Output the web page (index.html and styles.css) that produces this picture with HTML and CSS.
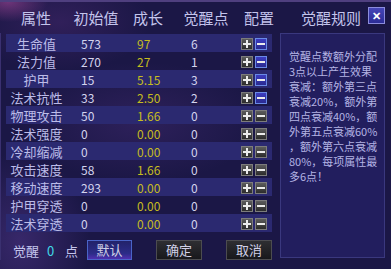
FILE: index.html
```html
<!DOCTYPE html>
<html>
<head>
<title>觉醒配置</title>
<link rel="stylesheet" href="styles.css">
</head>
<body>

<div class="window">
  <div class="header">
    <span class="col-name">属性</span>
    <span class="col-base">初始值</span>
    <span class="col-grow">成长</span>
    <span class="col-pts">觉醒点</span>
    <span class="col-cfg">配置</span>
    <span class="col-rule">觉醒规则</span>
    <div class="close">✕</div>
  </div>

  <div class="content">
    <div class="left">
      <div class="table" id="table"></div>

      <div class="footer">
        <span class="label">觉醒</span>
        <span class="free" id="free">0</span>
        <span class="label unit">点</span>
        <div class="btn blue">默认</div>
        <div class="btn dark ok">确定</div>
        <div class="btn dark cancel">取消</div>
      </div>
    </div>

    <div class="rules">
      觉醒点数额外分配<br>
      3点以上产生效果<br>
      衰减：额外第三点<br>
      衰减20%，额外第<br>
      四点衰减40%，额<br>
      外第五点衰减60%<br>
      ，额外第六点衰减<br>
      80%，每项属性最<br>
      多6点！
    </div>
  </div>
</div>

<script>
// attribute rows: name, base value, growth, awakening points
const rows = [
  ['生命值', '573', '97', 6],
  ['法力值', '270', '27', 1],
  ['护甲', '15', '5.15', 3],
  ['法术抗性', '33', '2.50', 2],
  ['物理攻击', '50', '1.66', 0],
  ['法术强度', '0', '0.00', 0],
  ['冷却缩减', '0', '0.00', 0],
  ['攻击速度', '58', '1.66', 0],
  ['移动速度', '293', '0.00', 0],
  ['护甲穿透', '0', '0.00', 0],
  ['法术穿透', '0', '0.00', 0]
];

const table = document.getElementById('table');

rows.forEach(function (r, i) {
  const row = document.createElement('div');
  row.className = 'row' + (i % 2 === 0 ? ' band' : '');
  row.innerHTML =
    '<span class="name">' + r[0] + '</span>' +
    '<span class="base">' + r[1] + '</span>' +
    '<span class="grow">' + r[2] + '</span>' +
    '<span class="pts">' + r[3] + '</span>' +
    '<span class="ops"><i class="op plus"></i><i class="op minus' + (r[3] > 0 ? ' on' : '') + '"></i></span>';
  table.appendChild(row);
});
</script>

</body>
</html>
```

FILE: styles.css
```css
* {
  margin: 0;
  padding: 0;
  box-sizing: border-box;
}

body {
  background-color: #17133d;
  font-family: "Noto Sans CJK SC", "Noto Sans", sans-serif;
}

/* Window with the purple backdrop */
.window {
  width: 391px;
  height: 269px;
  overflow: hidden;
  border-top: 2px solid #4f3f7f;
  background:
    radial-gradient(ellipse 40px 20px at 8px 0, rgba(160, 70, 150, 0.6), transparent),
    radial-gradient(ellipse 70px 90px at 20px 240px, rgba(90, 60, 150, 0.45), transparent),
    radial-gradient(ellipse 120px 60px at 140px 120px, rgba(80, 50, 130, 0.35), transparent),
    radial-gradient(ellipse 90px 50px at 60px 20px, rgba(70, 40, 110, 0.5), transparent),
    #1b1746;
}

/* Header */
.header {
  display: flex;
  align-items: center;
  height: 31px;
  padding-left: 5px;
  color: #c4c4ec;
  font-size: 15px;
  line-height: 18px;
}

.header span {
  text-align: center;
}

.col-name { width: 62px; }
.col-base { width: 58px; }
.col-grow { width: 46px; }
.col-pts { width: 70px; }
.col-cfg { width: 36px; }
.col-rule { margin-left: 24px; }

.close {
  width: 17px;
  height: 17px;
  margin-left: 7px;
  margin-top: -4px;
  background: linear-gradient(#4646b8, #2c2c96);
  border: 1px solid #8c8cdc;
  color: #fff;
  font-size: 11px;
  font-weight: bold;
  line-height: 15px;
  text-align: center;
}

/* Main area */
.content {
  display: flex;
  padding-left: 5px;
  border-left: 1px solid #3a3070;
}

.left {
  width: 266px;
  padding-top: 1px;
}

/* Table rows */
.row {
  display: grid;
  grid-template-columns: 75px 56px 54px 50px auto;
  align-items: center;
  height: 18px;
  font-size: 12px;
  color: #d4d4ee;
}

.row.band {
  background-color: #2b2970;
}

.row .name {
  padding-right: 14px;
  text-align: center;
  font-size: 13px;
  color: #bcbce8;
}

.row .grow {
  color: #c6bd1e;
}

.ops {
  display: flex;
  gap: 2px;
}

.op {
  position: relative;
  display: block;
  width: 12px;
  height: 12px;
  background: linear-gradient(#5c5c5c, #2c2c2c);
  border: 1px solid #7c7c7c;
}

.op::after,
.op.plus::before {
  content: "";
  position: absolute;
  left: 1px;
  right: 1px;
  top: 4px;
  height: 2px;
  background: #ececec;
}

.op.plus::before {
  left: 4px;
  right: auto;
  top: 1px;
  width: 2px;
  height: 8px;
}

.op.minus.on {
  background: linear-gradient(#3c3cc0, #2a2a90);
  border-color: #6a8ae6;
}

/* Footer */
.footer {
  display: flex;
  align-items: center;
  height: 20px;
  margin-top: 8px;
  padding-left: 7px;
  font-size: 13px;
  color: #c4c4ec;
}

.free {
  margin-left: 8px;
  width: 7px;
  font-size: 13px;
  color: #40d8e8;
}

.unit {
  margin-left: 11px;
}

.btn {
  height: 20px;
  font-size: 13px;
  line-height: 18px;
  text-align: center;
  color: #d0d0e6;
}

.btn.blue {
  width: 45px;
  margin-left: 9px;
  background: linear-gradient(#22226a, #2c2c88 70%, #5030b0);
  border: 1px solid #4a64c8;
}

.btn.dark {
  width: 46px;
  margin-left: 24px;
  background: linear-gradient(#2e2e32, #18181c);
  border: 1px solid #4c4c50;
}

/* Rules panel */
.rules {
  width: 105px;
  height: 225px;
  margin-left: 8px;
  padding: 15px 0 0 8px;
  background-color: #221e5e;
  border: 1px solid #3a387e;
  font-size: 11px;
  line-height: 15px;
  white-space: nowrap;
  color: #b4b4e4;
}
```
